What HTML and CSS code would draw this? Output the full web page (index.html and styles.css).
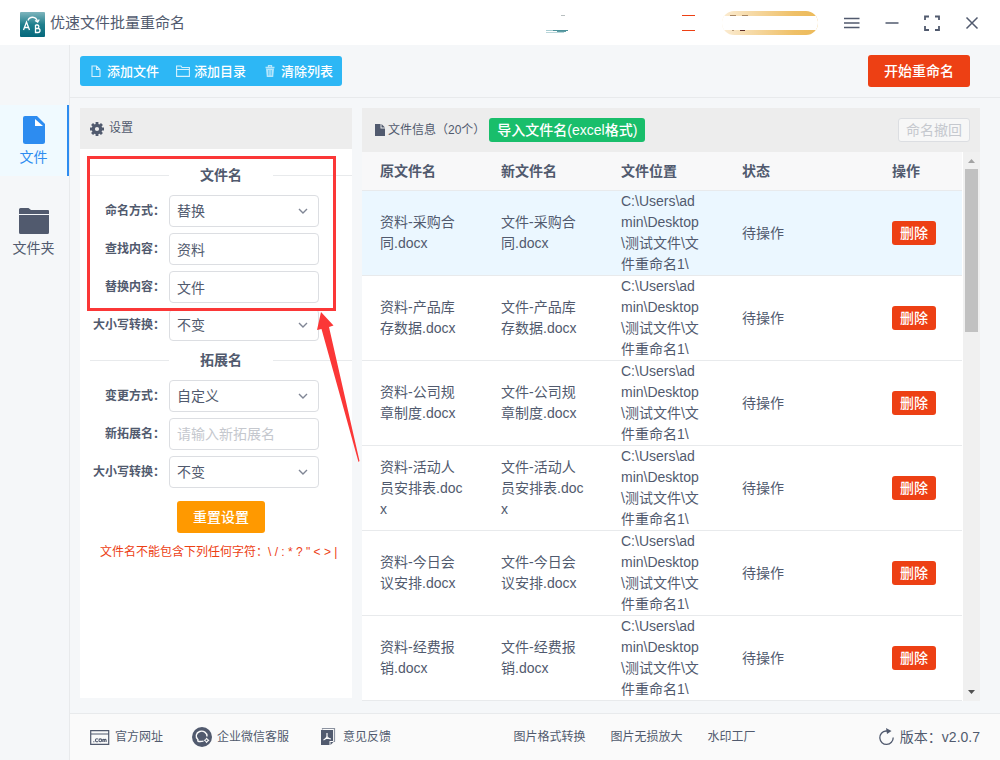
FILE: index.html
```html
<!DOCTYPE html>
<html lang="zh-CN">
<head>
    <meta charset="UTF-8">
    <title>优速文件批量重命名</title>
    <link rel="stylesheet" href="styles.css">
</head>
<body>

<header class="titlebar">
    <svg class="logo" width="25" height="25" viewBox="0 0 25 25">
        <defs>
            <linearGradient id="logo-bg" x1="0" y1="0" x2="0" y2="1">
                <stop offset="0" stop-color="#7fb5bd"/>
                <stop offset="0.5" stop-color="#1f7f8d"/>
                <stop offset="1" stop-color="#05687c"/>
            </linearGradient>
        </defs>
        <rect width="25" height="25" rx="1" fill="url(#logo-bg)"/>
        <g fill="none" stroke="#fff" stroke-width="1.3">
            <path d="M3.5 18 6.5 10 9.5 18M4.5 15.5h4"/>
            <path d="M15.5 13v7.5h2.5a2 2 0 0 0 0-4h-2.500M15.5 13h2a1.8 1.8 0 0 1 0 3.5"/>
            <path d="M8 8.500C9.5 4 16 4 17.5 9.5M15 8.500l2.700 1.700 1.500-2.700"/>
        </g>
    </svg>
    <h1>优速文件批量重命名</h1>
    <div class="account">
        <svg class="avatar" width="22" height="24" viewBox="0 0 22 24">
            <path d="M15 4.500h4" stroke="#b8bfc0"/>
            <path d="M0 19.500h8" stroke="#a9cdd2"/>
            <path d="M7 19.500h15" stroke="#4e929b"/>
            <path d="M0 21.500h18" stroke="#b9d6da"/>
            <path d="M11 20.500h9" stroke="#5f9da5"/>
        </svg>
        <span class="tag"></span>
        <span class="vip">
            <svg width="96" height="24" viewBox="0 0 96 24">
                <path d="M8 4.500h6M20 4.500h6" stroke="#a98762"/>
                <path d="M10 19.500h2" stroke="#b79a78"/>
                <path d="M18 19.500h5" stroke="#5f2f2c"/>
                <path d="M0 5h96v14H0z" fill="#fff"/>
            </svg>
        </span>
    </div>
    <div class="window-buttons">
        <button type="button" aria-label="菜单"><svg width="16" height="16" viewBox="0 0 16 16"><path d="M0 3.500h15.500M0 8h15.500M0 12.500h15.500" stroke="#515a6e" stroke-width="1.4"/></svg></button>
        <button type="button" aria-label="最小化"><svg width="16" height="16" viewBox="0 0 16 16"><path d="M1.500 8h13" stroke="#515a6e" stroke-width="1.5"/></svg></button>
        <button type="button" aria-label="最大化"><svg width="16" height="16" viewBox="0 0 16 16"><path d="M5 1.500H1V5M11 1.500h4V5M1 11v4h4M15 11v4h-4" fill="none" stroke="#515a6e" stroke-width="1.8"/></svg></button>
        <button type="button" aria-label="关闭"><svg width="16" height="16" viewBox="0 0 16 16"><path d="M2.500 2.500l11 11M13.500 2.500l-11 11" stroke="#515a6e" stroke-width="1.5"/></svg></button>
    </div>
</header>

<div class="app">
    <nav class="sidebar">
        <a href="#" class="side-item active">
            <svg width="32" height="30" viewBox="0 0 32 30">
                <path d="M7 1h12l8 8v17.500a2.500 2.500 0 0 1-2.500 2.500h-17A2.500 2.500 0 0 1 5 26.500V3a2 2 0 0 1 2-2z" fill="#2d8cf0"/>
                <path d="M17 4v7h8z" fill="#fff"/>
            </svg>
            文件
        </a>
        <a href="#" class="side-item">
            <svg width="32" height="30" viewBox="0 0 32 30" fill="#515a6e">
                <path d="M1 3.500a1.500 1.500 0 0 1 1.500-1.500h8l2.500 2h17a1 1 0 0 1 1 1v3H1z"/>
                <path d="M1 9h30v17.500a1.500 1.500 0 0 1-1.500 1.500h-27A1.500 1.500 0 0 1 1 26.500z"/>
            </svg>
            文件夹
        </a>
    </nav>

    <div class="main">
        <div class="toolbar">
            <div class="button-group">
                <button type="button">
                    <svg width="14" height="14" viewBox="0 0 14 14"><path d="M3 2h4.500L11 5.500V12.500H3zM7.500 2v3.500H11" fill="none" stroke="#d5f1fd" stroke-width="1.1"/></svg>
                    添加文件
                </button>
                <button type="button">
                    <svg width="14" height="14" viewBox="0 0 14 14"><path d="M.6 12.400V2h4.400l1 1.500h7.400v8.900zM.6 5.500h12.800" fill="none" stroke="#d5f1fd" stroke-width="1.1"/></svg>
                    添加目录
                </button>
                <button type="button">
                    <svg width="14" height="14" viewBox="0 0 14 14"><path d="M2.500 3.500h9M5.500 3V1.700h3V3" fill="none" stroke="#b5e6fc" stroke-width="1.3"/><path d="M3 4.500h8l-.8 8.500H3.800z" fill="#b5e6fc"/><path d="M5.500 6v5.500M7 6v5.500M8.500 6v5.500" stroke="#2db7f5" stroke-width=".5"/></svg>
                    清除列表
                </button>
            </div>
            <button type="button" class="start-button">开始重命名</button>
        </div>

        <div class="content">
            <section class="settings">
                <div class="panel-header">
                    <svg width="14" height="14" viewBox="0 0 14 14">
                        <circle cx="7" cy="7" r="3.7" fill="none" stroke="#515a6e" stroke-width="3.2"/>
                        <path d="M7 0v2.500M7 11.500V14M0 7h2.500M11.500 7H14M2.050 2.050l1.750 1.750M10.200 10.200l1.750 1.750M2.050 11.950l1.750-1.750M10.200 3.800l1.750-1.750" stroke="#515a6e" stroke-width="2.8"/>
                    </svg>
                    设置
                </div>
                <form class="settings-form">
                    <h2><span>文件名</span></h2>
                    <div class="field">
                        <label for="name-mode">命名方式：</label>
                        <div class="select">
                            <select id="name-mode"><option>替换</option></select>
                            <svg width="10" height="6" viewBox="0 0 10 6"><path d="M1 1l4 4 4-4"/></svg>
                        </div>
                    </div>
                    <div class="field">
                        <label for="find-text">查找内容：</label>
                        <input type="text" id="find-text" value="资料">
                    </div>
                    <div class="field">
                        <label for="replace-text">替换内容：</label>
                        <input type="text" id="replace-text" value="文件">
                    </div>
                    <div class="field">
                        <label for="name-case">大小写转换：</label>
                        <div class="select">
                            <select id="name-case"><option>不变</option></select>
                            <svg width="10" height="6" viewBox="0 0 10 6"><path d="M1 1l4 4 4-4"/></svg>
                        </div>
                    </div>
                    <h2><span>拓展名</span></h2>
                    <div class="field">
                        <label for="ext-mode">变更方式：</label>
                        <div class="select">
                            <select id="ext-mode"><option>自定义</option></select>
                            <svg width="10" height="6" viewBox="0 0 10 6"><path d="M1 1l4 4 4-4"/></svg>
                        </div>
                    </div>
                    <div class="field">
                        <label for="new-ext">新拓展名：</label>
                        <input type="text" id="new-ext" placeholder="请输入新拓展名">
                    </div>
                    <div class="field">
                        <label for="ext-case">大小写转换：</label>
                        <div class="select">
                            <select id="ext-case"><option>不变</option></select>
                            <svg width="10" height="6" viewBox="0 0 10 6"><path d="M1 1l4 4 4-4"/></svg>
                        </div>
                    </div>
                    <button type="button" class="reset-button">重置设置</button>
                    <p class="warning">文件名不能包含下列任何字符：\ / : * ? " &lt; &gt; |</p>
                </form>
                <div class="highlight"></div>
                <svg class="arrow" width="46" height="152" viewBox="0 0 46 152">
                    <path d="M6 1 18.500 14.500 14 16 44.500 150 43.500 151 6.500 18 2 19z" fill="#fb3737"/>
                </svg>
            </section>

            <section class="files">
                <div class="panel-header files-header">
                    <svg width="12" height="14" viewBox="0 0 12 14"><path d="M1 1h5.500v4.500H11V13H1z" fill="#515a6e"/><path d="M7.500 1L11 4.500H7.500z" fill="#515a6e"/></svg>
                    <span>文件信息（20个）</span>
                    <button type="button" class="import-button">导入文件名(excel格式)</button>
                    <button type="button" class="undo-button" disabled>命名撤回</button>
                </div>
                <div class="table-area">
                    <table>
                        <colgroup>
                            <col class="col-name"><col class="col-new"><col class="col-path"><col class="col-status"><col>
                        </colgroup>
                        <thead>
                            <tr><th>原文件名</th><th>新文件名</th><th>文件位置</th><th>状态</th><th>操作</th></tr>
                        </thead>
                        <tbody>
                            <tr class="selected">
                                <td>资料-采购合同.docx</td>
                                <td>文件-采购合同.docx</td>
                                <td class="path">C:\Users\admin\Desktop\测试文件\文件重命名1\</td>
                                <td>待操作</td>
                                <td><button type="button" class="delete-button">删除</button></td>
                            </tr>
                            <tr>
                                <td>资料-产品库存数据.docx</td>
                                <td>文件-产品库存数据.docx</td>
                                <td class="path">C:\Users\admin\Desktop\测试文件\文件重命名1\</td>
                                <td>待操作</td>
                                <td><button type="button" class="delete-button">删除</button></td>
                            </tr>
                            <tr>
                                <td>资料-公司规章制度.docx</td>
                                <td>文件-公司规章制度.docx</td>
                                <td class="path">C:\Users\admin\Desktop\测试文件\文件重命名1\</td>
                                <td>待操作</td>
                                <td><button type="button" class="delete-button">删除</button></td>
                            </tr>
                            <tr>
                                <td>资料-活动人员安排表.docx</td>
                                <td>文件-活动人员安排表.docx</td>
                                <td class="path">C:\Users\admin\Desktop\测试文件\文件重命名1\</td>
                                <td>待操作</td>
                                <td><button type="button" class="delete-button">删除</button></td>
                            </tr>
                            <tr>
                                <td>资料-今日会议安排.docx</td>
                                <td>文件-今日会议安排.docx</td>
                                <td class="path">C:\Users\admin\Desktop\测试文件\文件重命名1\</td>
                                <td>待操作</td>
                                <td><button type="button" class="delete-button">删除</button></td>
                            </tr>
                            <tr>
                                <td>资料-经费报销.docx</td>
                                <td>文件-经费报销.docx</td>
                                <td class="path">C:\Users\admin\Desktop\测试文件\文件重命名1\</td>
                                <td>待操作</td>
                                <td><button type="button" class="delete-button">删除</button></td>
                            </tr>
                        </tbody>
                    </table>
                    <div class="scrollbar" aria-hidden="true">
                        <svg width="17" height="17" viewBox="0 0 17 17"><path d="M5 11h7L8.500 7z" fill="#a3a3a3"/></svg>
                        <div class="thumb"></div>
                        <svg class="down" width="17" height="17" viewBox="0 0 17 17"><path d="M5 6h7l-3.500 4z" fill="#505050"/></svg>
                    </div>
                </div>
            </section>
        </div>

        <footer class="footer">
            <div class="footer-links">
                <a href="#">
                    <svg width="20" height="20" viewBox="0 0 20 20">
                        <path d="M.7 3.700h18v13.600H.7zM.7 7h18" fill="none" stroke="#515a6e" stroke-width="1.2"/>
                        <g fill="none" stroke="#515a6e" stroke-width="1.1"><path d="M3.200 14.800h1.200M8 12.200a1.500 1.500 0 1 0 0 2.100"/><circle cx="10.3" cy="13.3" r="1.4"/><path d="M12.800 15v-3M12.800 12.700q1.300-1 1.500.3v2M14.300 12.900q1.600-1.200 1.800.3V15"/></g>
                    </svg>
                    官方网址
                </a>
                <a href="#">
                    <svg width="20" height="20" viewBox="0 0 20 20">
                        <circle cx="10" cy="10" r="10" fill="#515a6e"/>
                        <path d="M5.700 14.500 6 12.700A5.400 4.900 0 1 1 15 9.500M6 14.300q2.500.6 5.500-.2" fill="none" stroke="#fafafa" stroke-width="1.4"/>
                        <path d="M14.500 10.500l1.500 1.700 1.500 1-1.700 1.500-1.300 1.500-1.200-1.800-1.600-1.200 1.700-1z" fill="#fafafa"/>
                        <circle cx="14.5" cy="13.3" r=".9" fill="#515a6e"/>
                    </svg>
                    企业微信客服
                </a>
                <a href="#">
                    <svg width="20" height="20" viewBox="0 0 20 20">
                        <path d="M4.500 2.500V1.500h12v13h-1" fill="none" stroke="#8b92a0" stroke-width="1.2"/>
                        <path d="M3 3h12v11h-3.500v4H3z" fill="#515a6e"/>
                        <path d="M12.500 18v-3H15.500z" fill="#515a6e"/>
                        <path d="M9 6v3.500q-.5 2.300-3.500 3.500M9 9.500q1 2.300 4 2.500M7 11.500h4" fill="none" stroke="#fafafa" stroke-width="1.2"/>
                    </svg>
                    意见反馈
                </a>
            </div>
            <div class="footer-tools">
                <a href="#">图片格式转换</a>
                <a href="#">图片无损放大</a>
                <a href="#">水印工厂</a>
            </div>
            <div class="version">
                <svg width="17" height="18" viewBox="0 0 17 18">
                    <path d="M9 3H8a6.700 6.700 0 1 0 7.200 6.500" fill="none" stroke="#515a6e" stroke-width="1.3"/>
                    <path d="M8 0l5.500 3L9 6z" fill="#515a6e"/>
                </svg>
                版本：v2.0.7
            </div>
        </footer>
    </div>
</div>

</body>
</html>
```
FILE: styles.css
```css
* {
    box-sizing: border-box;
}
body {
    margin: 0;
    min-height: 100vh;
    display: flex;
    flex-direction: column;
    font-family: "Liberation Sans", "Noto Sans CJK SC", sans-serif;
    font-size: 14px;
    line-height: 21px;
    color: #515a6e;
    background: #f5f7f9;
}
button, input, select {
    font-family: inherit;
    font-size: 14px;
    color: inherit;
}
button {
    border: 0;
    padding: 0 0 2px;
    border-radius: 3px;
    background: none;
    white-space: nowrap;
}
a {
    color: inherit;
    text-decoration: none;
}
svg {
    flex: none;
}

/* title bar */
.titlebar {
    height: 45px;
    padding: 0 20px;
    display: flex;
    align-items: center;
    background: #fff;
}
.titlebar h1 {
    margin: 0 0 0 5px;
    font-size: 15px;
    font-weight: normal;
}
.logo {
    margin-top: 3px;
}
.account {
    margin-left: auto;
    display: flex;
    align-items: center;
}
.tag {
    width: 13px;
    height: 16px;
    margin: 0 27px 0 114px;
    border-top: 1px solid #ed4014;
    border-bottom: 1px solid #ed4014;
}
.vip {
    height: 24px;
    border-radius: 12px;
    overflow: hidden;
    background: linear-gradient(to right, #fbecd3, #efc067 75%, #ecba5a);
}
.window-buttons {
    display: flex;
    gap: 24px;
    margin-left: 26px;
}
.window-buttons button {
    width: 16px;
    height: 16px;
    padding: 0;
}
.window-buttons svg, .vip svg {
    display: block;
}

/* left navigation */
.app {
    flex: 1;
    display: flex;
}
.sidebar {
    width: 70px;
    padding-top: 60px;
    border-right: 1px solid #e8eaec;
}
.side-item {
    display: flex;
    flex-direction: column;
    align-items: center;
    gap: 2px;
    margin-bottom: 20px;
    padding: 10px 0 8px;
    border-right: 2px solid transparent;
}
.side-item.active {
    color: #2d8cf0;
    background: #f0faff;
    border-right-color: #2d8cf0;
}
.main {
    flex: 1;
    min-width: 0;
    display: flex;
    flex-direction: column;
}

/* toolbar */
.toolbar {
    height: 53px;
    padding: 0 30px 0 10px;
    display: flex;
    align-items: center;
    justify-content: space-between;
    border-bottom: 1px solid #e8eaec;
}
.button-group {
    display: flex;
    height: 30px;
    padding-right: 1px;
    border-radius: 3px;
    background: #2db7f5;
}
.button-group button {
    display: flex;
    align-items: center;
    gap: 4px;
    padding: 0 8px 1px 9px;
    font-size: 13px;
    font-weight: 500;
    color: #fff;
}
.start-button {
    height: 32px;
    padding: 0 16px 2px;
    font-weight: 500;
    color: #fff;
    background: #ed4014;
}

/* panels */
.content {
    flex: 1;
    display: flex;
    gap: 10px;
    padding: 10px 20px 12px 10px;
}
.panel-header {
    display: flex;
    align-items: center;
    height: 41px;
    padding: 0 10px;
    font-size: 12px;
    background: #ededed;
}
.settings {
    position: relative;
    flex: none;
    width: 272px;
    margin-bottom: 3px;
    background: #fff;
}
.settings .panel-header {
    gap: 5px;
}
.settings-form {
    display: flex;
    flex-direction: column;
    gap: 6px;
    padding: 15px 0 0 10px;
}
.settings-form h2 {
    display: flex;
    align-items: center;
    margin: 0;
    height: 22px;
    font-size: 14px;
    font-weight: bold;
}
.settings-form h2::before, .settings-form h2::after {
    content: "";
    flex: 1;
    height: 1px;
    background: #e8eaec;
}
.settings-form h2 span {
    padding: 0 31px;
}
.settings-form h2 + .field {
    margin-top: 3px;
}
.field + h2 {
    margin-top: 2px;
}
.field {
    display: flex;
    align-items: center;
    gap: 4px;
}
.field label {
    width: 75px;
    font-size: 12px;
    font-weight: bold;
    text-align: right;
}
.field input, .field select {
    width: 150px;
    height: 32px;
    padding: 0 7px;
    border: 1px solid #dcdee2;
    border-radius: 4px;
    background: #fff;
    appearance: none;
}
.field input::placeholder {
    color: #c5c8ce;
}
.select {
    position: relative;
    display: flex;
}
.select svg {
    position: absolute;
    right: 11px;
    top: 13px;
    fill: none;
    stroke: #808695;
    stroke-width: 1.4;
    pointer-events: none;
}
.reset-button {
    align-self: center;
    width: 88px;
    height: 32px;
    margin-top: 7px;
    font-weight: 500;
    color: #fff;
    background: #ff9900;
}
.warning {
    margin: 3px 0 0 10px;
    font-size: 12px;
    color: #ed4014;
}

/* red frame and arrow over the form */
.highlight {
    position: absolute;
    left: 7px;
    top: 48px;
    width: 249px;
    height: 155px;
    border: 3px solid #fb3737;
}
.arrow {
    position: absolute;
    left: 235px;
    top: 203px;
    pointer-events: none;
}

/* file list */
.files {
    flex: 1;
    min-width: 0;
    display: flex;
    flex-direction: column;
    background: #fff;
}
.files-header {
    height: 44px;
    padding-left: 12px;
}
.files-header span {
    margin-left: 2px;
}
.import-button, .undo-button {
    height: 24px;
}
.import-button {
    margin-left: 4px;
    padding: 0 8px 2px;
    font-weight: 500;
    color: #fff;
    background: #19be6b;
}
.undo-button {
    margin-left: auto;
    padding: 0 7px 2px;
    border: 1px solid #dcdee2;
    color: #c5c8ce;
    background: #f7f7f7;
}
.table-area {
    flex: 1;
    display: flex;
    gap: 1px;
}
table {
    flex: 1;
    align-self: flex-start;
    width: 100%;
    table-layout: fixed;
    border-collapse: separate;
    border-spacing: 0;
}
.col-name, .col-path {
    width: 121px;
}
.col-new {
    width: 120px;
}
.col-status {
    width: 150px;
}
th, td {
    padding: 0 18px;
    text-align: left;
    border-bottom: 1px solid #e8eaec;
}
th {
    height: 39px;
    background: #f8f8f9;
}
td {
    height: 85px;
    word-break: break-all;
}
td.path {
    padding-right: 23px;
}
td:first-child, td:nth-child(2) {
    padding-right: 17px;
}
.selected td {
    background: #ebf7ff;
}
.delete-button {
    display: block;
    width: 44px;
    height: 24px;
    font-weight: 500;
    color: #fff;
    background: #ed4014;
}
.scrollbar {
    width: 17px;
    display: flex;
    flex-direction: column;
    background: #f0f0f0;
}
.scrollbar .thumb {
    height: 163px;
    margin: 0 2px;
    background: #c1c1c1;
}
.scrollbar .down {
    margin-top: auto;
}

/* footer */
.footer {
    height: 47px;
    padding: 0 20px;
    display: flex;
    align-items: center;
    justify-content: space-between;
    border-top: 1px solid #e8eaec;
    background: #fafafa;
    font-size: 12px;
}
.footer-links, .footer-links a, .version {
    display: flex;
    align-items: center;
}
.footer-links {
    gap: 29px;
}
.footer-links a, .version {
    gap: 5px;
}
.footer-tools {
    display: flex;
    gap: 25px;
}
.version {
    font-size: 14px;
}
```
